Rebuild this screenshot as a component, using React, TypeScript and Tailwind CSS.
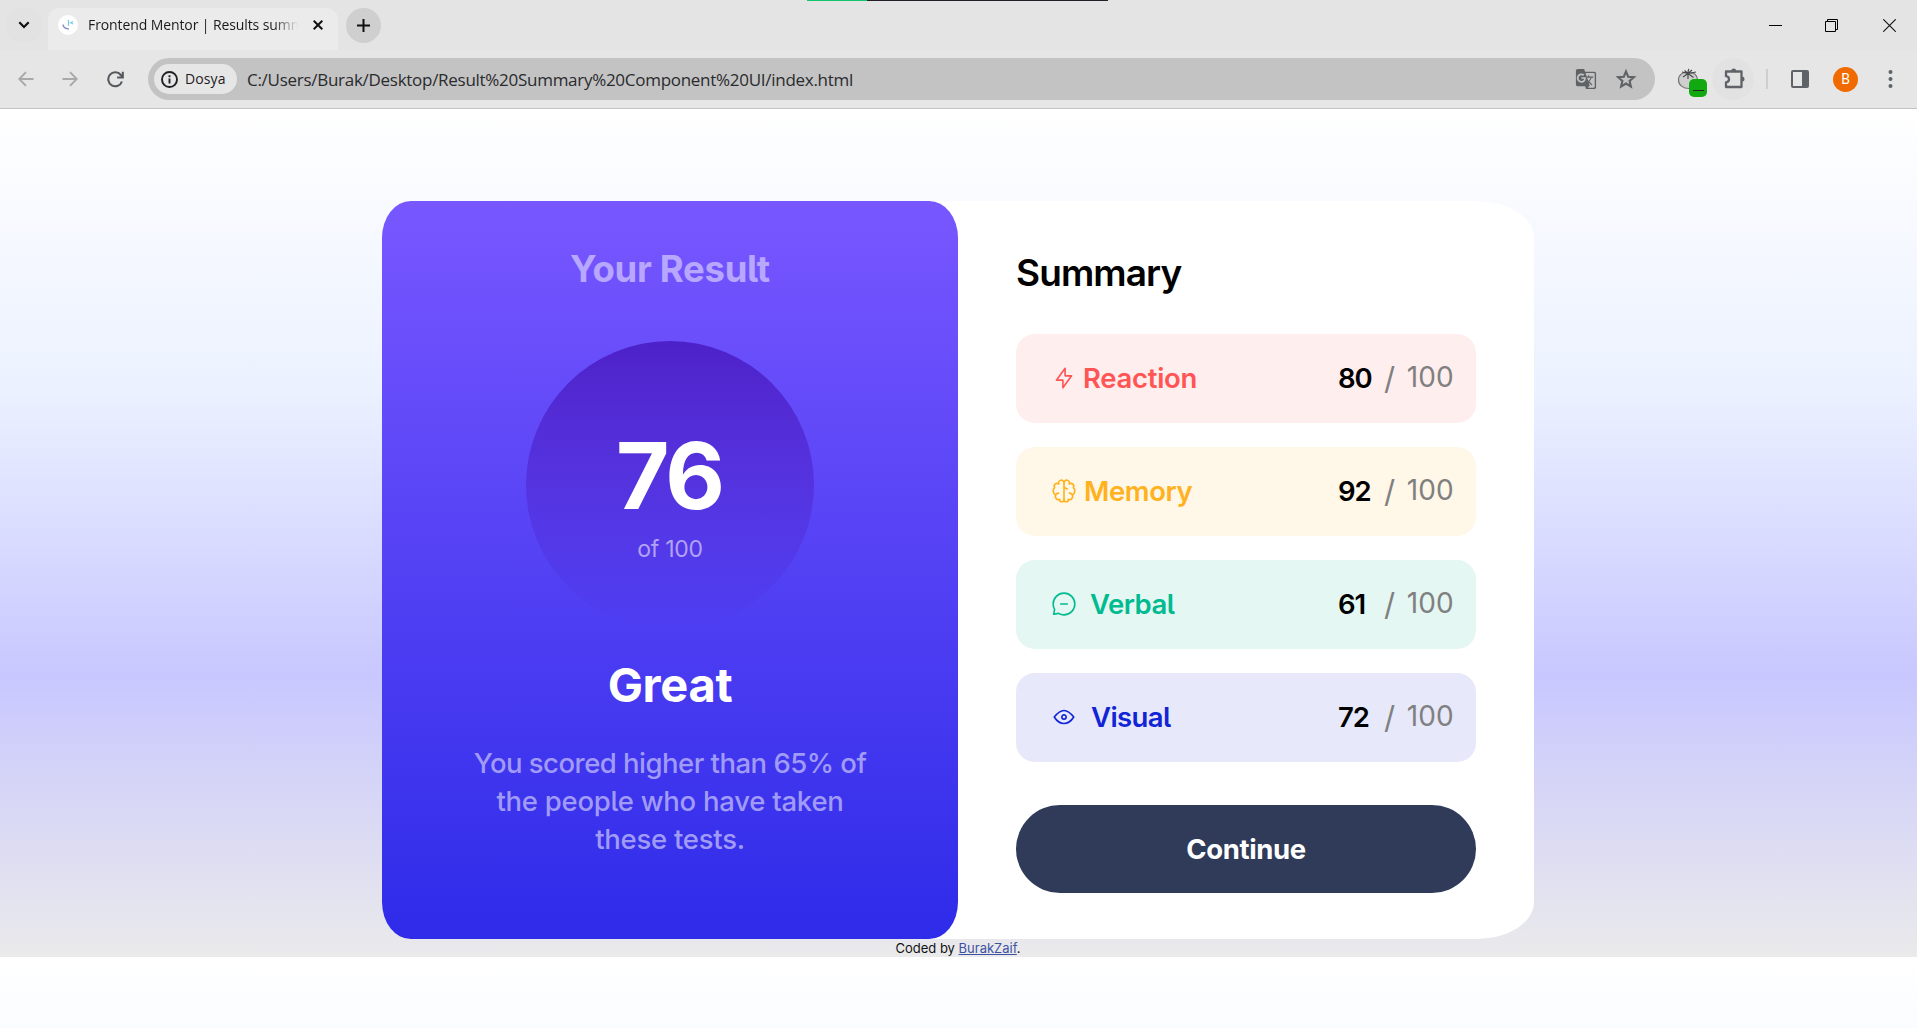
import type { ReactNode } from "react";
import { MdGTranslate } from "react-icons/md";

function TabStrip() {
  return (
    <div className="flex h-[50px] items-center bg-[#e4e4e4]">
      <div className="ml-[7px] flex h-[34px] w-[34px] items-center justify-center rounded-xl bg-[#e2e2e2]">
        <svg width="12" height="8" viewBox="0 0 12 8" fill="none" stroke="#111" strokeWidth="2.2">
          <path d="M1.3 1.3 6 6l4.700-4.700" />
        </svg>
      </div>
      <div className="ml-[7px] mt-2 flex h-[42px] w-[290px] items-start rounded-t-xl bg-[#ebebeb]">
        <div className="ml-[10px] mt-[7px] flex h-5 w-5 items-center justify-center rounded-full bg-white">
          <svg width="12" height="12" viewBox="0 0 12 12" fill="none" strokeWidth="1.3">
            <path d="M6.500 1v6" stroke="#7fcbe0" />
            <path d="M11 2.500 8.800 3.800 11 5" stroke="#7fcbe0" />
            <path d="M.8 5.500C1.500 8.500 4 10 7 9.800" stroke="#8791c9" />
          </svg>
        </div>
        <div className="ml-[10px] mt-[7px] h-5 w-[210px] overflow-hidden whitespace-nowrap bg-[linear-gradient(90deg,#1a1a1a_88%,transparent)] bg-clip-text font-['Open_Sans'] text-[14px] leading-5 tracking-[-0.1px] text-transparent">
          Frontend Mentor | Results summary
        </div>
        <svg className="ml-[15px] mt-3" width="10" height="10" viewBox="0 0 10 10" stroke="#111" strokeWidth="2">
          <path d="m.7.7 8.600 8.600M9.300.7.7 9.300" />
        </svg>
      </div>
      <div className="ml-2 flex h-[35px] w-[35px] items-center justify-center rounded-full bg-[#cfcfcf]">
        <svg width="13" height="13" viewBox="0 0 13 13" stroke="#111" strokeWidth="2">
          <path d="M6.500 0v13M0 6.500h13" />
        </svg>
      </div>
      <div className="ml-auto mr-[21px] flex items-center">
        <svg width="13" height="13" viewBox="0 0 13 13" stroke="#000">
          <path d="M0 6.500h13" />
        </svg>
        <svg className="ml-[43px]" width="13" height="13" viewBox="0 0 13 13" fill="none" stroke="#000">
          <path d="M.5 2.500h10v10H.5zM2.500 2.500v-2h10v10h-2" />
        </svg>
        <svg className="ml-[45px]" width="13" height="13" viewBox="0 0 13 13" stroke="#111" strokeWidth="1.100">
          <path d="m.3.3 12.400 12.400M12.700.3.3 12.700" />
        </svg>
      </div>
    </div>
  );
}

function Toolbar() {
  return (
    <div className="flex h-[59px] items-center border-b border-[#c3c3c3] bg-[#e6e6e6]">
      <svg className="ml-[18px]" width="16" height="16" viewBox="0 0 16 16" fill="none" stroke="#a9a9a9" strokeWidth="1.900">
        <path d="M15.500 8H1.500M8 1.200 1.300 8 8 14.800" />
      </svg>
      <svg className="ml-7" width="16" height="16" viewBox="0 0 16 16" fill="none" stroke="#a9a9a9" strokeWidth="1.900">
        <path d="M.5 8h14M8 1.200 14.700 8 8 14.800" />
      </svg>
      <svg className="ml-[29px]" width="17" height="17" viewBox="0 0 17 17" fill="none" stroke="#55595d" strokeWidth="2.100">
        <path d="M14.900 10.500A7 7 0 1 1 13.800 4L15.500 6" />
        <path d="M15.800.8v5.700h-5.700" />
      </svg>
      <div className="ml-6 flex h-[42px] w-[1507px] items-center rounded-full bg-[#c3c3c3]">
        <div className="ml-[6px] flex h-[30px] w-[83px] items-center rounded-full bg-[#e6e6e6]">
          <svg className="ml-[7px]" width="17" height="17" viewBox="0 0 17 17" fill="none" stroke="#1f2023" strokeWidth="1.900">
            <circle cx="8.500" cy="8.500" r="7.500" />
            <path d="M8.500 7.500v5M8.500 4.300v1.900" />
          </svg>
          <span className="ml-[7px] font-['Open_Sans'] text-[14px] font-medium leading-5 tracking-[0.1px] text-[#1f2023]">
            Dosya
          </span>
        </div>
        <span className="ml-[10px] mt-px whitespace-nowrap font-['Open_Sans'] text-[17px] leading-6 tracking-[-0.280px] text-[#2a2b2e]">
          C:/Users/Burak/Desktop/Result%20Summary%20Component%20UI/index.html
        </span>
        <MdGTranslate className="ml-auto h-[22px] w-[22px] text-[#606366]" />
        <svg className="ml-[17px] mr-[17px] h-6 w-6" viewBox="0 0 24 24" fill="none" stroke="#606366" strokeWidth="2.100">
          <path d="m12 4.400 2.200 5.300 5.700.5-4.300 3.700 1.300 5.600-4.900-3-4.900 3 1.300-5.600-4.300-3.700 5.700-.5Z" />
        </svg>
      </div>
      <div className="relative ml-[22px] h-[30px] w-[30px]">
        <svg width="30" height="30" viewBox="0 0 30 30" fill="none">
          <path d="M12 9C6 7 1.500 11 1.500 16S6 24.500 12 24.500s9-4 8.500-9S17 8.500 12 9Z" fill="#cfcfcf" stroke="#777" strokeWidth="1.200" />
          <path
            d="M11 9.500 5 8M11 9.500 6 13M11 9.500V15M11 9.500l5.500 4M11 9.500 19 8M11 9.500 7.500 6.500M11 9.500c0-2 0-3.500 1-4.500M11 9.500l4-3.500"
            stroke="#4a4a4a"
            strokeWidth="1.200"
          />
        </svg>
        <div className="absolute left-[12px] top-[15px] flex h-[18px] w-[18px] items-center justify-center rounded-[5px] bg-[#12a812]">
          <div className="mt-1 h-px w-[11px] bg-[#222]" />
        </div>
      </div>
      <div className="ml-[5px] flex h-[42px] w-[42px] items-center justify-center rounded-full bg-[#e2e2e2]">
        <svg className="ml-[4px]" width="22" height="22" viewBox="0 0 22 22" fill="none" stroke="#5f6368" strokeWidth="2.300">
          <path d="M2 3.500h15.500v15.500H2v-4.700c4-.5 4-5.600 0-6.100Z" strokeLinejoin="round" />
          <path d="M7.200 3a2.500 2.500 0 0 1 5 0ZM18 8.500a2.500 2.500 0 0 1 0 5Z" fill="#5f6368" stroke="none" />
        </svg>
      </div>
      <div className="ml-3 h-5 w-[2px] bg-[#cfcfcf]" />
      <div className="ml-[23px] h-[18px] w-[18px] rounded-[2px] border-2 border-r-[7px] border-[#5f6368]" />
      <div className="ml-6 flex h-[25px] w-[25px] items-center justify-center rounded-full bg-[#f06a00] font-['Roboto'] text-[14px] text-white">
        B
      </div>
      <svg className="ml-[30px]" width="5" height="18" viewBox="0 0 5 18" fill="#5f6368">
        <circle cx="2.500" cy="2" r="2" />
        <circle cx="2.500" cy="9" r="2" />
        <circle cx="2.500" cy="16" r="2" />
      </svg>
    </div>
  );
}

type Category = {
  name: string;
  score: number;
  card: string;
  color: string;
  label: string;
  icon: ReactNode;
};

const categories: Category[] = [
  {
    name: "Reaction",
    score: 80,
    card: "bg-[#ffeeee]",
    color: "text-[#ff5555]",
    label: "ml-[6px] tracking-[-0.3px]",
    icon: <path d="M10.833 8.333V2.500l-6.666 9.167h5V17.500l6.666-9.167h-5Z" />,
  },
  {
    name: "Memory",
    score: 92,
    card: "bg-[#fff7e8]",
    color: "text-[#ffb21e]",
    label: "ml-[7px] tracking-[-0.4px]",
    icon: (
      <>
        <path d="M5.833 11.667a2.500 2.500 0 1 0 .834 4.858" />
        <path d="M3.553 13.004a3.333 3.333 0 0 1-.728-5.530m.025-.067a2.083 2.083 0 0 1 2.983-2.824m.199.054A2.083 2.083 0 1 1 10 3.750v12.917a1.667 1.667 0 0 1-3.333 0M10 5.833a2.500 2.500 0 0 0 2.500 2.500m1.667 3.334a2.500 2.500 0 1 1-.834 4.858" />
        <path d="M16.447 13.004a3.334 3.334 0 0 0 .728-5.530m-.025-.067a2.083 2.083 0 0 0-2.983-2.824M10 3.750a2.085 2.085 0 0 1 2.538-2.033 2.084 2.084 0 0 1 1.430 2.920m-.635 12.028a1.667 1.667 0 0 1-3.333 0" />
      </>
    ),
  },
  {
    name: "Verbal",
    score: 61,
    card: "bg-[#e5f7f3]",
    color: "text-[#00bb8f]",
    label: "ml-[13px] tracking-[-0.5px]",
    icon: (
      <path d="M7.500 10h5M10 18.333A8.333 8.333 0 1 0 1.667 10c0 1.518.406 2.942 1.115 4.167l-.699 3.750 3.750-.699A8.295 8.295 0 0 0 10 18.333Z" />
    ),
  },
  {
    name: "Visual",
    score: 72,
    card: "bg-[#e7e8fa]",
    color: "text-[#1125d6]",
    label: "ml-[14px] tracking-[-0.6px]",
    icon: (
      <>
        <path d="M10 11.667a1.667 1.667 0 1 0 0-3.334 1.667 1.667 0 0 0 0 3.334Z" />
        <path d="M17.500 10c-1.574 2.492-4.402 5-7.500 5s-5.926-2.508-7.500-5C4.416 7.632 6.660 5 10 5s5.584 2.632 7.500 5Z" />
      </>
    ),
  },
];

function ResultPanel() {
  return (
    <section className="flex h-[738px] w-[576px] flex-col items-center rounded-[5%] bg-[linear-gradient(180deg,#7857ff,#2e2be9)] text-center">
      <h1 className="mt-[44px] text-[36.500px] font-bold leading-[48px] tracking-[-0.3px] text-[#b8a7ff]">Your Result</h1>
      <div className="mt-12 flex h-72 w-72 flex-col items-center rounded-full bg-[linear-gradient(180deg,#4d21c9,rgba(37,33,201,0))]">
        <div className="mr-[2px] mt-[87px] text-[92px] font-bold leading-[96px] tracking-[-3px] text-white">76</div>
        <div className="mt-[9px] text-[23px] leading-8 tracking-[-0.3px] text-[#b3a2f4]">of 100</div>
      </div>
      <h2 className="mt-7 text-[47px] font-bold leading-[56px] tracking-[-0.3px] text-white">Great</h2>
      <p className="mt-[31px] text-[27.500px] font-medium leading-[38px] tracking-[-0.250px] text-[#a09bf6]">
        <span className="tracking-[-0.520px]">You scored higher than 65% of</span>
        <br />
        the people who have taken
        <br />
        these tests.
      </p>
    </section>
  );
}

function SummaryPanel() {
  return (
    <section className="flex w-[576px] flex-col px-[58px]">
      <h2 className="mt-[48px] text-[37px] font-semibold leading-[48px] tracking-[-0.900px] text-black">Summary</h2>
      <div className="mt-[37px] flex flex-col gap-6">
        {categories.map((c) => (
          <div key={c.name} className={`flex h-[89px] items-center rounded-[19px] pb-px pr-[22px] ${c.card}`}>
            <svg
              className={`ml-[35px] mt-[-1px] h-[26px] w-[26px] ${c.color}`}
              viewBox="0 0 20 20"
              fill="none"
              stroke="currentColor"
              strokeWidth="1.250"
              strokeLinecap="round"
              strokeLinejoin="round"
            >
              {c.icon}
            </svg>
            <span className={`text-[27.500px] font-semibold leading-9 ${c.color} ${c.label}`}>{c.name}</span>
            <span className="ml-auto w-[46px] text-[27.500px] font-semibold leading-9 tracking-[-1.200px] text-black">{c.score}</span>
            <span className="flex text-[28px] leading-9 text-[#808080]">
              <span className="mt-[2px] w-[22px] text-[31px]">/</span>
              <span className="w-[48px] text-right tracking-[0.200px]">100</span>
            </span>
          </div>
        ))}
      </div>
      <button className="mt-[43px] h-[88px] rounded-[50px] bg-[#303b5a] text-[27.500px] font-bold leading-9 tracking-[-0.4px] text-white">
        Continue
      </button>
    </section>
  );
}

export default function App() {
  return (
    <div className="flex h-[1028px] w-[1917px] flex-col overflow-hidden bg-white">
      <div className="relative">
        <TabStrip />
        <Toolbar />
        <div className="absolute left-[807px] top-0 flex h-px w-[301px] bg-[#242027]">
          <div className="w-[60px] bg-[#12c46c]" />
        </div>
      </div>
      <main className="flex h-[848px] shrink-0 flex-col items-center bg-[linear-gradient(180deg,#ffffff_0%,#ebf1ff_33.300%,#c8c7ff_66.700%,#eaeaeb_100%)] pr-px font-['Inter'] [font-feature-settings:'cv05']">
        <div className="mt-[92px] flex h-[738px] w-[1152px] rounded-[5%] bg-white">
          <ResultPanel />
          <SummaryPanel />
        </div>
        <footer className="text-[13px] leading-[18px] text-[#111]">
          Coded by <a className="text-[#3e52a3] underline">BurakZaif</a>.
        </footer>
      </main>
      <div className="grow bg-[linear-gradient(180deg,#ffffff,#fafcff)]" />
    </div>
  );
}
